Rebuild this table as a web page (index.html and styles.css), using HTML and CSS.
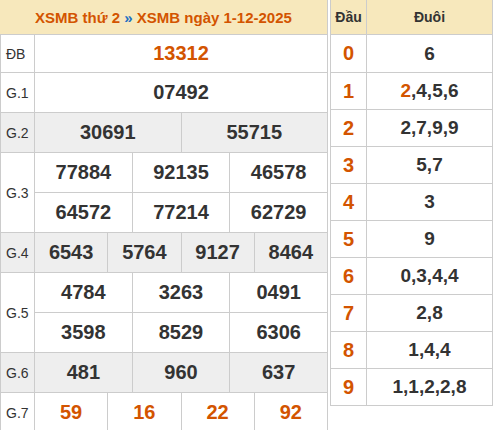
FILE: index.html
```html
<!DOCTYPE html>
<html lang="vi">
<head>
<meta charset="utf-8">
<title>XSMB</title>
<link rel="stylesheet" href="styles.css">
</head>
<body>
<div class="page">
  <div class="kq">
    <div class="kq-title"><span>XSMB thứ 2 <span class="sep">»</span> XSMB ngày 1-12-2025</span></div>

    <div class="lbl">ĐB</div>
    <div class="num red c12">13312</div>

    <div class="lbl">G.1</div>
    <div class="num c12">07492</div>

    <div class="lbl alt">G.2</div>
    <div class="num alt c6">30691</div>
    <div class="num alt c6">55715</div>

    <div class="lbl r2">G.3</div>
    <div class="num c4">77884</div>
    <div class="num c4">92135</div>
    <div class="num c4">46578</div>
    <div class="num c4">64572</div>
    <div class="num c4">77214</div>
    <div class="num c4">62729</div>

    <div class="lbl alt">G.4</div>
    <div class="num alt c3">6543</div>
    <div class="num alt c3">5764</div>
    <div class="num alt c3">9127</div>
    <div class="num alt c3">8464</div>

    <div class="lbl r2">G.5</div>
    <div class="num c4">4784</div>
    <div class="num c4">3263</div>
    <div class="num c4">0491</div>
    <div class="num c4">3598</div>
    <div class="num c4">8529</div>
    <div class="num c4">6306</div>

    <div class="lbl alt">G.6</div>
    <div class="num alt c4">481</div>
    <div class="num alt c4">960</div>
    <div class="num alt c4">637</div>

    <div class="lbl">G.7</div>
    <div class="num red c3">59</div>
    <div class="num red c3">16</div>
    <div class="num red c3">22</div>
    <div class="num red c3">92</div>
  </div>

  <div class="loto">
    <div class="lt-head">Đầu</div>
    <div class="lt-head">Đuôi</div>

    <div class="dau">0</div><div class="duoi">6</div>
    <div class="dau">1</div><div class="duoi"><span><span class="hl">2</span>,4,5,6</span></div>
    <div class="dau">2</div><div class="duoi">2,7,9,9</div>
    <div class="dau">3</div><div class="duoi">5,7</div>
    <div class="dau">4</div><div class="duoi">3</div>
    <div class="dau">5</div><div class="duoi">9</div>
    <div class="dau">6</div><div class="duoi">0,3,4,4</div>
    <div class="dau">7</div><div class="duoi">2,8</div>
    <div class="dau">8</div><div class="duoi">1,4,4</div>
    <div class="dau">9</div><div class="duoi">1,1,2,2,8</div>
  </div>
</div>
</body>
</html>
```

FILE: styles.css
```css
* { box-sizing: border-box; }

html, body {
  margin: 0;
  padding: 0;
  background: #fff;
}

body {
  font-family: "Liberation Sans", Arial, sans-serif;
  color: #333;
}

.page {
  display: flex;
  align-items: flex-start;
  gap: 2px;
  width: 493px;
  height: 430px;
  overflow: hidden;
}

/* ---------- result table ---------- */
.kq {
  width: 328px;
  flex: none;
  display: grid;
  grid-template-columns: 35px repeat(12, 1fr);
  grid-template-rows: 35px 38px repeat(10, 40px);
}

.kq > div {
  display: flex;
  align-items: center;
  justify-content: center;
  border-right: 1px solid #ccc;
  border-bottom: 1px solid #ccc;
  background: #fff;
}

.kq .kq-title {
  grid-column: 1 / -1;
  background: #f7e8bc;
  color: #d35400;
  font-weight: bold;
  font-size: 15px;
  white-space: nowrap;
}

.kq-title .sep {
  color: #1d6fc2;
}

.kq .lbl {
  grid-column: 1;
  border-left: 1px solid #ccc;
  font-size: 14px;
  color: #333;
  justify-content: flex-start;
  padding-left: 5px;
}

.kq .r2 { grid-row: span 2; }

.kq .num {
  font-weight: bold;
  font-size: 20px;
  color: #333;
}

.kq .num.red { color: #d35400; }

.kq .alt { background: #eee; }

.c12 { grid-column: span 12; }
.c6 { grid-column: span 6; }
.c4 { grid-column: span 4; }
.c3 { grid-column: span 3; }

/* ---------- loto table ---------- */
.loto {
  width: 163px;
  flex: none;
  display: grid;
  grid-template-columns: 36px 1fr;
  grid-template-rows: 35px 38px repeat(9, 37px);
  border-left: 1px solid #ccc;
}

.loto > div {
  display: flex;
  align-items: center;
  justify-content: center;
  border-right: 1px solid #ccc;
  border-bottom: 1px solid #ccc;
}

.loto .lt-head {
  background: #f7e8bc;
  font-weight: bold;
  font-size: 14px;
  color: #333;
}

.loto .dau {
  font-weight: bold;
  font-size: 20px;
  color: #d35400;
}

.loto .duoi {
  font-weight: bold;
  font-size: 19px;
  color: #333;
}

.loto .hl { color: #d35400; }
```
